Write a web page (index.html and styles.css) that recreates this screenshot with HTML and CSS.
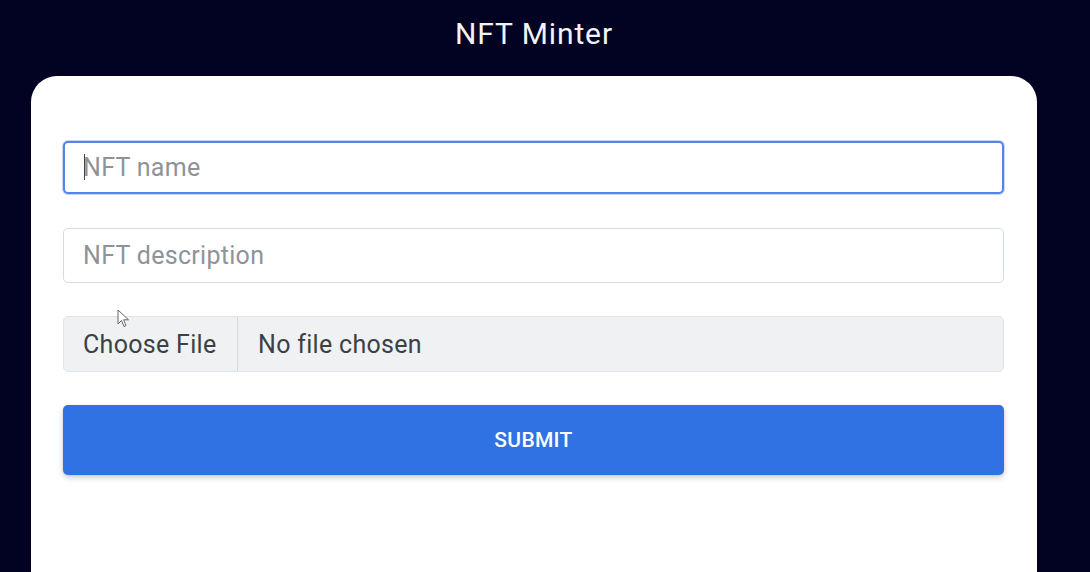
FILE: index.html
```html
<!DOCTYPE html>
<html lang="en">
<head>
<meta charset="utf-8">
<title>NFT Minter</title>
<link rel="stylesheet" href="styles.css">
</head>
<body>
<div class="page">
  <h1 class="title">NFT Minter</h1>
  <div class="card">
    <form class="form">
      <div class="field field-focus">
        <span class="caret"></span>
        <input class="input" type="text" placeholder="NFT name">
      </div>
      <div class="field">
        <input class="input" type="text" placeholder="NFT description">
      </div>
      <div class="file">
        <span class="file-btn">Choose File</span>
        <span class="file-name">No file chosen</span>
      </div>
      <button class="submit" type="button">SUBMIT</button>
    </form>
  </div>
  <svg class="pointer" width="14" height="20" viewBox="0 0 14 20">
    <path d="M1 1 L1 15 L4.5 11.5 L7 17.5 L9 16.6 L6.6 10.8 L11.5 10.8 Z" fill="#fff" stroke="#666" stroke-width="1" stroke-linejoin="round"/>
  </svg>
</div>
</body>
</html>
```
FILE: styles.css
```css
* { box-sizing: border-box; }
html, body {
  margin: 0;
  padding: 0;
  background: #020322;
  height: 100%;
  overflow: hidden;
}
.page {
  position: relative;
  font-family: Roboto, "Liberation Sans", sans-serif;
  padding: 0 53px 0 31px;
}
.title {
  margin: 0;
  height: 76px;
  padding-top: 14px;
  text-align: center;
  color: #f2f3f7;
  font-weight: 400;
  font-size: 30px;
  letter-spacing: 0.9px;
  line-height: 40px;
}
.card {
  background: #fff;
  border-radius: 26px 26px 0 0;
  height: 520px;
  padding: 65px 33px 0 32px;
}
.form {
  display: flex;
  flex-direction: column;
}
.field {
  position: relative;
  margin-bottom: 33px;
}
.input {
  width: 100%;
  height: 55px;
  border: 1px solid #d6dce6;
  border-radius: 5px;
  padding: 0 19px;
  font-family: Roboto, "Liberation Sans", sans-serif;
  font-size: 25px;
  letter-spacing: 0.3px;
  color: #333;
  outline: none;
  background: #fff;
}
.input::placeholder { color: #8f9399; }
.field-focus { margin-bottom: 34px; }
.field-focus .input {
  height: 53px;
  border: 2px solid #5484e6;
  box-shadow: 0 0 0 1px #c8d6f4;
  padding-left: 18px;
}
.caret {
  position: absolute;
  left: 21px;
  top: 13px;
  width: 1px;
  height: 26px;
  background: #444;
  z-index: 2;
}
.file {
  display: flex;
  height: 56px;
  border: 1px solid #e0e3e8;
  border-radius: 5px;
  background: #eff1f3;
  font-size: 25px;
  letter-spacing: 0.3px;
  color: #3c3f44;
  margin-bottom: 33px;
}
.file-btn {
  display: flex;
  align-items: center;
  padding: 0 0 0 19px;
  width: 174px;
  border-right: 1px solid #d4d9e2;
}
.file-name {
  display: flex;
  align-items: center;
  padding-left: 20px;
}
.submit {
  height: 70px;
  width: 100%;
  border: none;
  border-radius: 5px;
  background: #3071e3;
  color: #fff;
  font-family: Roboto, "Liberation Sans", sans-serif;
  font-weight: 500;
  font-size: 21px;
  letter-spacing: 0.3px;
  box-shadow: 0 3px 6px rgba(0,0,0,0.16), 0 1px 3px rgba(0,0,0,0.1);
}
.pointer {
  position: absolute;
  left: 117px;
  top: 309px;
}
```
